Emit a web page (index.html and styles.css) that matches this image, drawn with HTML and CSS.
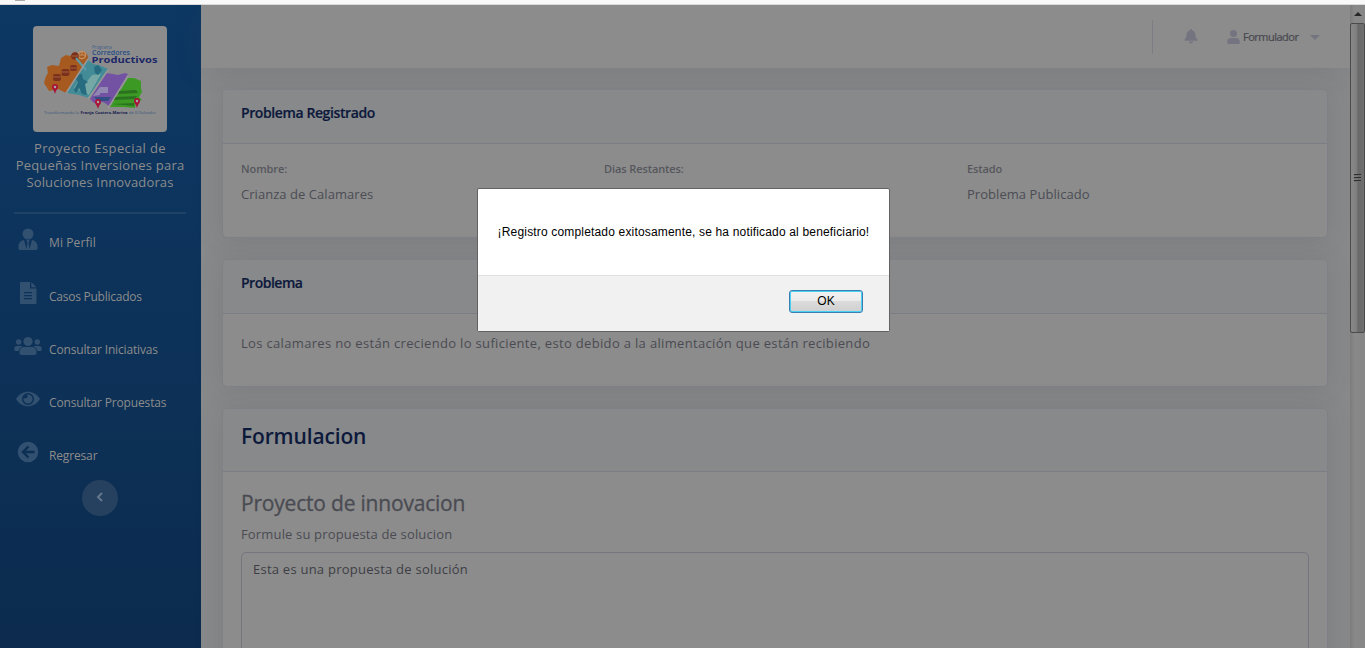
FILE: index.html
```html
<!DOCTYPE html>
<html lang="es">
<head>
<meta charset="utf-8">
<title>Formulador</title>
<link rel="stylesheet" href="styles.css">
</head>
<body>
<div class="chrome"><i class="chrome-mark"></i></div>
<div class="page">
  <nav class="sidebar">
    <div class="logo">
      <svg width="134" height="106" viewBox="0 0 134 106">
        <path fill="#a65a20" d="M11 57l2-7 2-3-1-6 5-2 7 1 2-8 5-3 4 1 5-4 4 2c3-4 9-2 9 4l-1 4-21 31-8-4-9 2z"/>
        <circle cx="49" cy="29" r="3.600" fill="none" stroke="#c79262" stroke-width="1.400"/>
        <path stroke="#c79262" d="M49 25v4M46 29h6"/>
        <g fill="#7b321c"><circle cx="42" cy="30" r="3.800"/><rect x="20" y="48" width="8" height="7" rx="2"/><rect x="28.500" y="43" width="8" height="7" rx="2"/><rect x="37" y="39" width="7" height="6" rx="2"/></g>
        <path stroke="#a85c39" d="M20 51h8M28 46h8M37 42h7M39 30h6"/>
        <path fill="#438c97" d="M34 67l21-33 5 4 6 1 9 4-3 4-16 25-10-3z"/>
        <path fill="#75a7a6" d="M41 62l6-10 5 6 7-9 9-1-12 21-8-4z"/>
        <path fill="#266b7f" d="M46 48l3 0 1 5 5 3-3 2 2 11-5-1-3-6-3 5-2-3 4-8-2-3zM61 41l4-2 4 5-4 5-3-2z"/>
        <path stroke="#5d9bab" stroke-width="2" d="M43 32l10 12"/>
        <path fill="#7352a3" d="M57 73l16-26 7 1 5 1 7-2 3 1-19 32-6-4-9 1z"/>
        <path fill="#9188b1" d="M67 61h8v6h-8zM60 70l7-9v8z"/>
        <path fill="#314f83" d="M61 71h17l-3 4H65z"/>
        <path fill="#3c9a24" d="M77 81l18-29 6 0 7 3 0 7 1 4-3 5 3 3-6 2-1 6-12-1z"/>
        <path fill="#2b7220" d="M86 65l17-1 2 3-20 1zM82 71l22-1-2 3-21 1zM79 78l22-1v3z"/>
        <path stroke="#989998" stroke-width="1.400" d="M33 67l22-34M55 73l20-29M75 82l20-32"/>
        <g fill="#a91337"><path d="M19 61a3 3 0 0 1 6 0c0 2-2 3-3 7-1-4-3-5-3-7zM62 76a3 3 0 0 1 6 0c0 2-2 3-3 7-1-4-3-5-3-7zM101 75a3 3 0 0 1 6 0c0 2-2 3-3 7-1-4-3-5-3-7z"/></g>
        <g fill="#aaa"><circle cx="22" cy="61" r="1.200"/><circle cx="65" cy="76" r="1.200"/><circle cx="104" cy="75" r="1.200"/></g>
        <g class="logo-words">
          <text x="59" y="22.500" font-size="4.400" textLength="20" lengthAdjust="spacingAndGlyphs" fill="#43608b">Programa</text>
          <text x="59" y="28.800" font-size="6.500" textLength="38" lengthAdjust="spacingAndGlyphs" fill="#244c86" font-weight="600">Corredores</text>
          <text x="58.500" y="37.200" font-size="8.800" textLength="66" lengthAdjust="spacingAndGlyphs" fill="#1c2867" font-weight="700">Productivos</text>
          <text x="11" y="88" font-size="4.200" textLength="35" lengthAdjust="spacingAndGlyphs" fill="#38577e">Transformando la</text>
          <text x="47.500" y="88" font-size="4.200" textLength="47" lengthAdjust="spacingAndGlyphs" fill="#171c50" font-weight="700">Franja Costero-Marina</text>
          <text x="96" y="88" font-size="4.200" textLength="27" lengthAdjust="spacingAndGlyphs" fill="#38577e">de El Salvador</text>
        </g>
      </svg>
    </div>
    <div class="brand"><span class="b1">Proyecto Especial de</span><span class="b2">Pequeñas Inversiones para</span><span class="b3">Soluciones Innovadoras</span></div>
    <hr class="rule">
    <ul class="menu">
      <li><svg viewBox="0 0 28 24"><circle cx="14" cy="6" r="5.500"/><path d="M10 12l2.500 9 1-6-1-3h3l-1 3 1 6L18 12c3 .5 5.500 3 5.500 6v2.500q0 1.500-1.500 1.500H6q-1.500 0-1.500-1.500V18c0-3 2.500-5.500 5.500-6z"/></svg><span class="m1">Mi Perfil</span></li>
      <li><svg viewBox="0 0 28 24"><path fill-rule="evenodd" d="M7 0h9v6.500h6.500V21q0 1-1 1H7q-1 0-1-1V1q0-1 1-1zM10 10v1.300h8V10zM10 13v1.300h8V13zM10 16v1.300h8V16zM17.300 0l5.200 5.200h-5.200z"/></svg><span class="m2">Casos Publicados</span></li>
      <li><svg viewBox="0 0 28 24"><circle cx="14" cy="6.500" r="4.600"/><circle cx="4.700" cy="7" r="2.700"/><circle cx="23.300" cy="7" r="2.700"/><path d="M10 12h8c3 0 4.500 2 4.500 5v1q0 2-2 2h-13q-2 0-2-2v-1c0-3 1.500-5 4.500-5zM3 11h4.200l1 .7C6 12.800 5 14 4.600 16H1.500Q.3 16 .3 14.800V13.700Q.3 11 3 11zM25 11h-4.200l-1 .7c2.200 1.100 3.200 2.300 3.600 4.300h3.100q1.200 0 1.200-1.200v-1.100Q27.700 11 25 11z"/></svg><span class="m3">Consultar Iniciativas</span></li>
      <li><svg viewBox="0 0 28 24"><path fill-rule="evenodd" d="M2 11C8 1.300 20 1.300 26 11 20 20.700 8 20.700 2 11zM8 11a6 6 0 1 0 12 0 6 6 0 1 0-12 0z"/><path d="M14 6.500a4.500 4.500 0 1 1-4.300 3.200q3 1.500 3.800-1 .2-1.200-.6-2z"/></svg><span class="m4">Consultar Propuestas</span></li>
      <li><svg viewBox="0 0 28 24"><circle cx="14" cy="11" r="10.300"/><path class="arrow" d="M20.500 11H9M14.500 5.500L9 11l5.500 5.500"/></svg><span class="m5">Regresar</span></li>
    </ul>
    <div class="toggle"><svg width="8" height="10" viewBox="0 0 8 10"><path d="M6 1L2 5l4 4"/></svg></div>
  </nav>
  <main class="main">
    <header class="topbar">
      <i class="divider"></i>
      <svg class="bell" width="14" height="15" viewBox="0 0 14 15"><path d="M6.200 0h1.600v1.200c2.500.5 3.700 2.300 3.700 5 0 2.200.5 3 1.600 4 .8.700.3 1.500-.5 1.500H1.200c-.8 0-1.200-.8-.5-1.500 1.200-1 1.700-1.800 1.700-4 0-2.700 1.300-4.500 3.800-5zM5 12.600h4a2 2 0 0 1-4 0z"/></svg>
      <svg class="user" width="13" height="14" viewBox="0 0 13 14"><circle cx="6.500" cy="3.500" r="3.500"/><path d="M3.700 8h5.600c2 0 3.400 1.500 3.400 3.300V13q0 1-1 1H1.300q-1 0-1-1v-1.700C.3 9.500 1.700 8 3.700 8z"/></svg>
      <span class="username">Formulador</span>
      <i class="caret"></i>
    </header>
    <div class="cards">
      <section class="card registered">
        <div class="head"><h6 class="t1">Problema Registrado</h6></div>
        <div class="cols">
          <div><label>Nombre:</label><p>Crianza de Calamares</p></div>
          <div><label>Dias Restantes:</label></div>
          <div><label>Estado</label><p>Problema Publicado</p></div>
        </div>
      </section>
      <section class="card problem">
        <div class="head"><h6 class="t2">Problema</h6></div>
        <p class="desc">Los calamares no están creciendo lo suficiente, esto debido a la alimentación que están recibiendo</p>
      </section>
      <section class="card form">
        <div class="head big"><h4>Formulacion</h4></div>
        <div class="form-body">
          <h4>Proyecto de innovacion</h4>
          <p class="hint">Formule su propuesta de solucion</p>
          <div class="area"><span>Esta es una propuesta de solución</span></div>
        </div>
      </section>
    </div>
  </main>
  <div class="scroll"><div class="up"></div><div class="thumb"><i></i><i></i><i></i></div></div>
</div>
<div class="dialog" role="alertdialog">
  <div class="message"><span>¡Registro completado exitosamente, se ha notificado al beneficiario!</span></div>
  <div class="actions"><button type="button">OK</button></div>
</div>
</body>
</html>
```
FILE: styles.css
```css
* { box-sizing: border-box; }
body { margin: 0; width: 1365px; height: 648px; overflow: hidden; position: relative; font-family: "Open Sans", sans-serif; font-size: 14px; color: #4a4b52; }
h4, h6, p, ul { margin: 0; padding: 0; font-weight: 400; }
span, h4, h6, p, label { white-space: nowrap; }
.chrome { height: 5px; background: #f9f9f9; border-bottom: 1px solid #dadada; padding-left: 15px; }
.chrome-mark { display: block; width: 10px; height: 1px; background: #aaa; }
.page { display: flex; height: 643px; overflow: hidden; }
.sidebar { width: 201px; padding-right: 1px; background: linear-gradient(180deg, #0d3864 0%, #0d3259 50%, #0c2b4e 100%); display: flex; flex-direction: column; align-items: center; }
.logo { width: 134px; height: 106px; margin-top: 21px; background: #8c8c8c; border-radius: 4px; flex: none; }
.logo svg { display: block; }
.logo-words { font-family: "Open Sans", sans-serif; }
.brand { margin-top: 8px; display: flex; flex-direction: column; align-items: center; line-height: 17px; color: #8c8c8c; font-size: 13px; }
.b1 { letter-spacing: .4px; }
.b2 { letter-spacing: .2px; }
.b3 { letter-spacing: .14px; }
.rule { width: 172px; height: 2px; border: 0; background: #214267; margin: 21px 0 0; flex: none; }
.menu { list-style: none; align-self: stretch; padding: 14px 0 0 14px; }
.menu li { display: flex; height: 53px; gap: 7px; color: #8c8c8c; font-size: 12px; line-height: 30px; letter-spacing: -.15px; }
.menu .m1 { letter-spacing: .1px; }
.menu .m2 { letter-spacing: -.25px; }
.menu svg { width: 28px; height: 24px; fill: #32506f; flex: none; }
.menu li:not(:first-child) { padding-top: 1px; }
.menu .arrow { fill: none; stroke: #0c2f54; stroke-width: 2.4; }
.toggle { width: 36px; height: 36px; border-radius: 50%; background: #25415f; display: flex; align-items: center; justify-content: center; flex: none; margin-top: -13px; }
.toggle svg { fill: none; stroke: #65778b; stroke-width: 2; margin-top: -3px; }
.main { width: 1149px; background: #88898b; }
.topbar { height: 63px; background: #8c8c8c; box-shadow: 0 2px 28px rgba(58,59,69,.15); display: flex; align-items: center; padding-right: 30px; justify-content: flex-end; }
.divider { width: 1px; height: 34px; background: #7d7e84; margin-right: 31px; }
.bell { margin-right: 29px; fill: #73747f; }
.user { margin-right: 3px; fill: #73747f; }
.username { font-size: 11px; color: #47484e; width: 57px; letter-spacing: -.5px; -webkit-text-stroke: .2px; margin-top: -1px; }
.caret { border: 5px solid transparent; border-top-color: #73747f; border-bottom: 0; margin-left: 10px; margin-top: 2px; }
.cards { padding: 21px 22px 0 21px; display: flex; flex-direction: column; gap: 22px; }
.card { background: #8c8c8c; border-radius: 5px; border: 1px solid #808186; box-shadow: 0 2px 28px rgba(58,59,69,.15); overflow: hidden; flex: none; }
.head { height: 54px; padding: 12px 18px; background: #88898b; border-bottom: 1px solid #7c7d84; }
.registered { height: 149px; }
.problem { height: 128px; margin-top: -1px; }
.form { height: 300px; margin-top: -1px; }
.head h6 { font-size: 14px; font-weight: 600; line-height: 22px; color: #0d193b; -webkit-text-stroke: .2px; }
.t1 { letter-spacing: -.4px; }
.t2 { letter-spacing: -.5px; }
.cols { display: grid; grid-template-columns: 363px 363px 363px; padding: 14px 18px; }
.cols label { display: block; font-size: 11px; font-weight: 600; line-height: 21px; color: #56575d; letter-spacing: -.1px; }
.cols p { line-height: 20px; margin-top: 5px; font-size: 13px; color: #4b4c54; letter-spacing: .05px; }
.desc { padding: 19px 18px; line-height: 20px; font-size: 13px; letter-spacing: .33px; }
.head.big { height: 63px; padding-top: 13px; }
.big h4 { font-size: 21px; font-weight: 600; line-height: 29px; color: #0d193b; letter-spacing: -.15px; }
.form-body { padding: 16px 18px; }
.form-body h4 { font-size: 21px; font-weight: 500; line-height: 30px; letter-spacing: -.2px; -webkit-text-stroke: .3px; }
.hint { margin-top: 6px; line-height: 20px; font-size: 13px; letter-spacing: .16px; }
.area { height: 180px; margin-top: 8px; border: 1px solid #74757f; border-radius: 5px; padding: 6px 11px; line-height: 20px; color: #3d3e45; font-size: 13px; letter-spacing: .24px; }
.scroll { width: 15px; background: linear-gradient(90deg, #7c7c7c, #888 30%, #878787); }
.up { height: 18px; display: flex; justify-content: center; align-items: center; }
.up::before { content: ""; border: 4px solid transparent; border-bottom-color: #262626; border-top: 0; }
.thumb { height: 310px; border: 1px solid #4b4b4b; border-radius: 2px; background: linear-gradient(90deg, #888, #808080 40%, #696969 55%, #707070); display: flex; flex-direction: column; gap: 1px; align-items: center; justify-content: center; }
.thumb i { width: 7px; height: 2px; background: #2e2e2e; border-bottom: 1px solid #707070; }
.dialog { position: absolute; left: 477px; top: 188px; width: 413px; height: 144px; background: #fff; border: 1px solid #626262; border-radius: 2px; font-family: "Liberation Sans", sans-serif; font-size: 12px; color: #000; }
.message { height: 86px; display: flex; align-items: center; justify-content: center; letter-spacing: .17px; }
.actions { height: 56px; background: #f1f1f1; border-top: 1px solid #dfdfdf; display: flex; justify-content: flex-end; padding: 14px 26px 0 0; }
.actions button { width: 74px; height: 23px; padding: 0 0 2px; border: 1px solid #3c7fb1; border-radius: 3px; box-shadow: inset 0 0 0 1px #48d0f5; background: linear-gradient(#f2f2f2, #ebebeb 48%, #dbdbdb 50%, #cfcfcf); font: 12px "Liberation Sans", sans-serif; color: #000; }
```
